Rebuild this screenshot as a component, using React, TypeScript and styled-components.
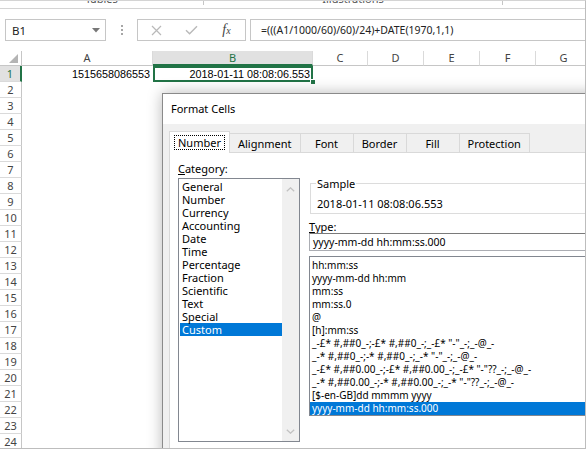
import React from "react";
import styled, { createGlobalStyle } from "styled-components";

const ui = `"Noto Sans", "Liberation Sans", Arial, sans-serif`;
const cellFont = `"Liberation Sans", Arial, sans-serif`;

const GlobalStyle = createGlobalStyle`
  html, body { margin: 0; padding: 0; background: #ffffff; }
  body { font-family: ${ui}; color: #000; }
  *, *::before, *::after { box-sizing: border-box; }
`;

const Screen = styled.div`
  position: relative;
  width: 586px;
  height: 449px;
  overflow: hidden;
  background: #fff;
  border-top: 1px solid #d4d4d4;
  border-right: 1px solid #bdbdbd;
  border-bottom: 1px solid #bdbdbd;
  display: flex;
  flex-direction: column;
`;

/* ---------- ribbon stub ---------- */
const Ribbon = styled.div`
  flex: none;
  height: 8px;
  display: flex;
  border-bottom: 1px solid #d4d4d4;
  overflow: hidden;
`;
const RibbonGroup = styled.div<{ $w?: number }>`
  flex: ${(p) => (p.$w ? `0 0 ${p.$w}px` : "1 1 auto")};
  text-align: center;
`;
const RibbonLabel = styled.span`
  display: block;
  margin-top: -8px;
  font: 11px/11px ${ui};
  color: #555;
`;
const RibbonSep = styled.span`
  flex: none;
  width: 1px;
  height: 4px;
  background: #c6c6c6;
`;

/* ---------- formula bar ---------- */
const FormulaBar = styled.div`
  flex: none;
  height: 22px;
  margin-top: 10px;
  display: flex;
  padding-left: 5px;
`;
const NameBox = styled.div`
  flex: none;
  width: 101px;
  border: 1px solid #c6c6c6;
  display: flex;
  align-items: center;
  justify-content: space-between;
  padding: 0 5px 0 6px;
  font: 11.5px ${ui};
  color: #222;
`;
const Grip = styled.div`
  flex: none;
  width: 31px;
  display: flex;
  flex-direction: column;
  align-items: center;
  justify-content: center;
  gap: 2px;
`;
const GripDot = styled.span`
  width: 2px;
  height: 2px;
  background: #a6a6a6;
`;
const FxGroup = styled.div`
  flex: none;
  width: 109px;
  border: 1px solid #c6c6c6;
  display: grid;
  grid-template-columns: 35px 35px 35px;
  align-items: center;
  justify-items: center;
  padding-left: 1px;
`;
const FxLabel = styled.span`
  font-family: "Liberation Serif", "DejaVu Serif", serif;
  font-style: italic;
  color: #444;
  font-size: 14px;
  line-height: 14px;
  & > small {
    font-size: 10px;
  }
`;
const FormulaInput = styled.div`
  flex: 1;
  margin-left: 4px;
  border: 1px solid #c6c6c6;
  border-right: none;
  padding-left: 10px;
  font: 10.5px/20px ${ui};
  color: #222;
  white-space: nowrap;
`;

/* ---------- sheet ---------- */
const Sheet = styled.div`
  flex: none;
  margin-top: 10px;
  display: grid;
  grid-template-columns: 22px 131px 160px 55px 56px 56px 56px 56px;
  grid-template-rows: 15px;
  grid-auto-rows: 16px;
`;
const Corner = styled.div`
  border-right: 1px solid #c6c6c6;
  border-bottom: 1px solid #c6c6c6;
  display: flex;
  align-items: flex-end;
  justify-content: flex-end;
  padding: 0 3px 2px 0;
`;
const ColHeader = styled.div<{ $active?: boolean }>`
  border-right: 1px solid #dadada;
  border-bottom: ${(p) => (p.$active ? "2px solid #217346" : "1px solid #c6c6c6")};
  background: ${(p) => (p.$active ? "#e1e1e1" : "#fff")};
  color: ${(p) => (p.$active ? "#217346" : "#444")};
  font: 11px/14px ${ui};
  text-align: center;
`;
const RowHeader = styled.div<{ $active?: boolean }>`
  border-bottom: 1px solid #dadada;
  border-right: ${(p) => (p.$active ? "2px solid #217346" : "1px solid #c6c6c6")};
  background: ${(p) => (p.$active ? "#e1e1e1" : "#fff")};
  color: ${(p) => (p.$active ? "#217346" : "#444")};
  font: 11px/15px ${ui};
  text-align: center;
`;
const Cell = styled.div<{ $selected?: boolean }>`
  position: relative;
  font: 10.8px/16px ${cellFont};
  color: #000;
  text-align: right;
  padding-right: 3px;
  white-space: nowrap;
  box-shadow: ${(p) => (p.$selected ? "inset 0 0 0 2px #217346" : "none")};
  z-index: ${(p) => (p.$selected ? 1 : 0)};
  &::after {
    content: "";
    display: ${(p) => (p.$selected ? "block" : "none")};
    position: absolute;
    right: -3px;
    bottom: -3px;
    width: 6px;
    height: 6px;
    background: #217346;
    border: 1px solid #fff;
  }
`;

/* ---------- dialog ---------- */
const Dialog = styled.div`
  position: absolute;
  left: 162px;
  top: 92px;
  width: 440px;
  height: 380px;
  background: #f0f0f0;
  border: 1px solid #8a8a8a;
  box-shadow: 0 0 14px rgba(0, 0, 0, 0.28);
  display: flex;
  flex-direction: column;
  z-index: 5;
`;
const TitleBar = styled.div`
  flex: none;
  height: 30px;
  background: #fff;
  padding-left: 8px;
  font: 11px/29px ${ui};
  color: #000;
`;
const DialogBody = styled.div`
  flex: 1;
  padding: 7px 6px 0 6px;
  display: flex;
  flex-direction: column;
`;
const TabRow = styled.div`
  flex: none;
  height: 21px;
  display: flex;
  align-items: flex-end;
`;
const Tab = styled.div<{ $active?: boolean }>`
  position: relative;
  min-width: 54px;
  height: ${(p) => (p.$active ? "22px" : "19px")};
  margin-bottom: ${(p) => (p.$active ? "-1px" : "0")};
  margin-left: -1px;
  &:first-child {
    margin-left: 0;
  }
  z-index: ${(p) => (p.$active ? 2 : 1)};
  padding: 0 ${(p) => (p.$active ? "4px" : "8px")};
  border: 1px solid #d9d9d9;
  border-bottom: none;
  background: ${(p) => (p.$active ? "#fff" : "#f0f0f0")};
  font: 11px/17px ${ui};
  color: #000;
  text-align: center;
  display: flex;
  align-items: center;
  justify-content: center;
`;
const FocusText = styled.span`
  border: 1px dotted #000;
  padding: 0 3px;
  line-height: 13px;
`;
const Panel = styled.div`
  flex: none;
  height: 297px;
  background: #fff;
  border: 1px solid #d9d9d9;
  display: flex;
  padding: 9px 0 0 8px;
`;
const LeftCol = styled.div`
  flex: none;
  width: 122px;
  display: flex;
  flex-direction: column;
`;
const FieldLabel = styled.div`
  font: 11px/13px ${ui};
  height: 13px;
  color: #000;
  & > u {
    text-decoration-thickness: 1px;
    text-underline-offset: 1px;
  }
`;
const CategoryList = styled.div`
  margin-top: 3px;
  height: 264px;
  border: 1px solid #828790;
  display: flex;
`;
const ListItems = styled.div`
  flex: 1;
  padding-top: 1px;
  overflow: hidden;
`;
const CatItem = styled.div<{ $selected?: boolean }>`
  height: 13px;
  margin-left: 1px;
  padding-left: 2px;
  font: 11px/13px ${ui};
  white-space: nowrap;
  background: ${(p) => (p.$selected ? "#0078d7" : "transparent")};
  color: ${(p) => (p.$selected ? "#fff" : "#000")};
`;
const ScrollTrack = styled.div`
  flex: none;
  width: 17px;
  background: #f0f0f0;
  display: flex;
  flex-direction: column;
  justify-content: space-between;
  align-items: center;
  padding: 8px 0 7px;
`;
const RightCol = styled.div`
  flex: none;
  width: 300px;
  margin-left: 9px;
  display: flex;
  flex-direction: column;
`;
const SampleBox = styled.fieldset`
  margin: 14px 0 0 1px;
  padding: 0 0 2px 5px;
  border: 1px solid #dcdcdc;
  min-width: 0;
`;
const SampleLegend = styled.legend`
  padding: 0 1px;
  font: 11px/15px ${ui};
  color: #000;
`;
const SampleText = styled.div`
  margin-top: 6px;
  font: 11px/14px ${ui};
  color: #000;
  padding-left: 1px;
`;
const TypeLabel = styled(FieldLabel)`
  margin-top: 6px;
`;
const TypeInput = styled.div`
  height: 18px;
  border: 1px solid #abadb3;
  border-top-color: #7a7a7a;
  padding-left: 3px;
  font: 10.5px/16px ${ui};
  white-space: nowrap;
`;
const TypeList = styled.div`
  margin-top: 5px;
  height: 160px;
  border: 1px solid #828790;
  padding-top: 2px;
  overflow: hidden;
`;
const TypeItem = styled.div<{ $selected?: boolean }>`
  height: 13px;
  padding-left: 2px;
  font: 10px/13px ${ui};
  white-space: nowrap;
  background: ${(p) => (p.$selected ? "#0078d7" : "transparent")};
  color: ${(p) => (p.$selected ? "#fff" : "#000")};
`;

/* ---------- icons ---------- */
const DropTriangle = () => (
  <svg width="8" height="5" viewBox="0 0 8 5">
    <polygon points="0,0 8,0 4,4.5" fill="#777" />
  </svg>
);
const CancelIcon = () => (
  <svg width="11" height="11" viewBox="0 0 11 11">
    <path d="M1 1 L10 10 M10 1 L1 10" stroke="#b9b9b9" strokeWidth="1.2" fill="none" />
  </svg>
);
const EnterIcon = () => (
  <svg width="13" height="10" viewBox="0 0 13 10">
    <path d="M1 5.2 L4.6 8.8 L12 1.2" stroke="#b9b9b9" strokeWidth="1.4" fill="none" />
  </svg>
);
const SelectAll = () => (
  <svg width="9" height="9" viewBox="0 0 9 9">
    <polygon points="9,0 9,9 0,9" fill="#b4b4b4" />
  </svg>
);
const Chevron = ({ down }: { down?: boolean }) => (
  <svg width="9" height="5" viewBox="0 0 9 5">
    <path
      d={down ? "M0.8 0.8 L4.5 4.2 L8.2 0.8" : "M0.8 4.2 L4.5 0.8 L8.2 4.2"}
      stroke="#c2c2c2"
      strokeWidth="1.3"
      fill="none"
    />
  </svg>
);

const columns = ["A", "B", "C", "D", "E", "F", "G"];
const categories = [
  "General",
  "Number",
  "Currency",
  "Accounting",
  "Date",
  "Time",
  "Percentage",
  "Fraction",
  "Scientific",
  "Text",
  "Special",
  "Custom",
];
const types = [
  "hh:mm:ss",
  "yyyy-mm-dd hh:mm",
  "mm:ss",
  "mm:ss.0",
  "@",
  "[h]:mm:ss",
  '_-£* #,##0_-;-£* #,##0_-;_-£* "-"_-;_-@_-',
  '_-* #,##0_-;-* #,##0_-;_-* "-"_-;_-@_-',
  '_-£* #,##0.00_-;-£* #,##0.00_-;_-£* "-"??_-;_-@_-',
  '_-* #,##0.00_-;-* #,##0.00_-;_-* "-"??_-;_-@_-',
  "[$-en-GB]dd mmmm yyyy",
  "yyyy-mm-dd hh:mm:ss.000",
];
const tabs = ["Number", "Alignment", "Font", "Border", "Fill", "Protection"];

export default function App() {
  const rows = Array.from({ length: 24 }, (_, i) => i + 1);
  return (
    <>
      <GlobalStyle />
      <Screen>
        <Ribbon>
          <RibbonGroup $w={203}>
            <RibbonLabel>Tables</RibbonLabel>
          </RibbonGroup>
          <RibbonSep />
          <RibbonGroup $w={298}>
            <RibbonLabel>Illustrations</RibbonLabel>
          </RibbonGroup>
          <RibbonSep />
          <RibbonGroup />
        </Ribbon>

        <FormulaBar>
          <NameBox>
            <span>B1</span>
            <DropTriangle />
          </NameBox>
          <Grip>
            <GripDot />
            <GripDot />
            <GripDot />
          </Grip>
          <FxGroup>
            <CancelIcon />
            <EnterIcon />
            <FxLabel>
              f<small>x</small>
            </FxLabel>
          </FxGroup>
          <FormulaInput>=(((A1/1000/60)/60)/24)+DATE(1970,1,1)</FormulaInput>
        </FormulaBar>

        <Sheet>
          <Corner>
            <SelectAll />
          </Corner>
          {columns.map((c) => (
            <ColHeader key={c} $active={c === "B"}>
              {c}
            </ColHeader>
          ))}
          {rows.map((r) => (
            <React.Fragment key={r}>
              <RowHeader $active={r === 1}>{r}</RowHeader>
              <Cell>{r === 1 ? "1515658086553" : ""}</Cell>
              <Cell $selected={r === 1}>{r === 1 ? "2018-01-11 08:08:06.553" : ""}</Cell>
              <Cell />
              <Cell />
              <Cell />
              <Cell />
              <Cell />
            </React.Fragment>
          ))}
        </Sheet>

        <Dialog>
          <TitleBar>Format Cells</TitleBar>
          <DialogBody>
            <TabRow>
              {tabs.map((t) => (
                <Tab key={t} $active={t === "Number"}>
                  {t === "Number" ? <FocusText>{t}</FocusText> : t}
                </Tab>
              ))}
            </TabRow>
            <Panel>
              <LeftCol>
                <FieldLabel>
                  <u>C</u>ategory:
                </FieldLabel>
                <CategoryList>
                  <ListItems>
                    {categories.map((c) => (
                      <CatItem key={c} $selected={c === "Custom"}>
                        {c}
                      </CatItem>
                    ))}
                  </ListItems>
                  <ScrollTrack>
                    <Chevron />
                    <Chevron down />
                  </ScrollTrack>
                </CategoryList>
              </LeftCol>
              <RightCol>
                <SampleBox>
                  <SampleLegend>Sample</SampleLegend>
                  <SampleText>2018-01-11 08:08:06.553</SampleText>
                </SampleBox>
                <TypeLabel>
                  <u>T</u>ype:
                </TypeLabel>
                <TypeInput>yyyy-mm-dd hh:mm:ss.000</TypeInput>
                <TypeList>
                  {types.map((t, i) => (
                    <TypeItem key={i} $selected={i === types.length - 1}>
                      {t}
                    </TypeItem>
                  ))}
                </TypeList>
              </RightCol>
            </Panel>
          </DialogBody>
        </Dialog>
      </Screen>
    </>
  );
}
